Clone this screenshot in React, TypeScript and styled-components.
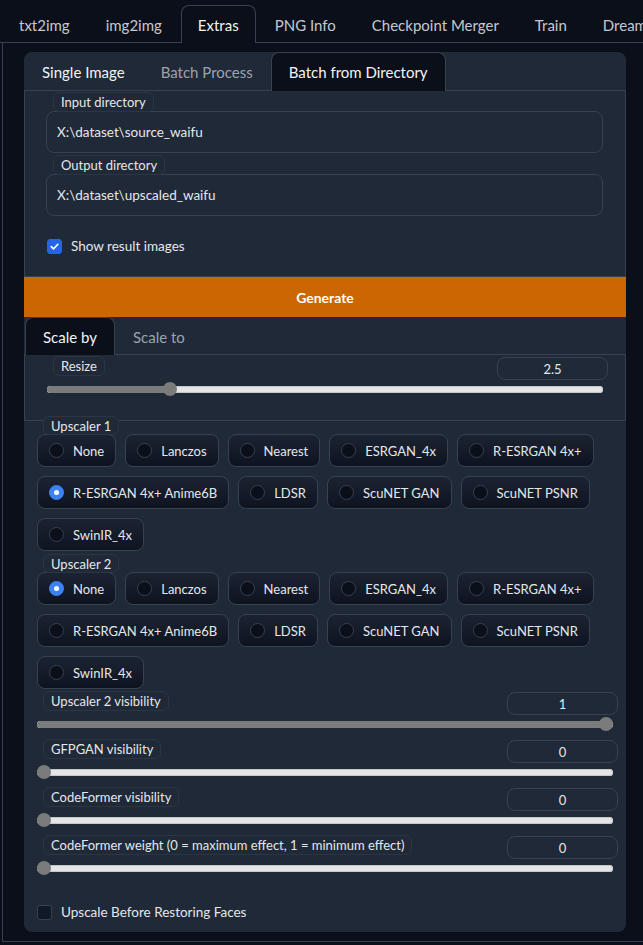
import styled, { createGlobalStyle } from "styled-components";

const GlobalStyle = createGlobalStyle`
  body {
    margin: 0;
    background: #0b0f19;
    color: #e5e7eb;
    font-family: Lato, "Noto Sans", sans-serif;
    overflow: hidden;
  }
`;

const Page = styled.div`
  width: 680px;
`;

const TopTabs = styled.div`
  display: flex;
  align-items: flex-end;
  height: 43px;
  border-bottom: 1px solid #374151;
  padding-left: 2px;
  box-sizing: border-box;
`;

const TopTab = styled.div<{ $active?: boolean }>`
  box-sizing: border-box;
  padding: 0 16px;
  margin-right: 2px;
  margin-bottom: -1px;
  display: flex;
  align-items: center;
  font-size: 15px;
  white-space: nowrap;
  color: ${(p) => (p.$active ? "#f3f4f6" : "#c4c9d1")};
  background: ${(p) => (p.$active ? "#0b0f19" : "transparent")};
  border: 1px solid ${(p) => (p.$active ? "#374151" : "transparent")};
  border-bottom: none;
  border-radius: 8px 8px 0 0;
  height: 38px;
`;

const Outer = styled.div`
  margin-left: 2px;
  border: 1px solid #374151;
  border-top: none;
  padding: 9px 0 9px 21px;
`;

const Panel = styled.div`
  width: 602px;
  background: #1f2937;
  border-radius: 8px;
  overflow: hidden;
`;

const TabRow = styled.div`
  display: flex;
  height: 39px;
  border-bottom: 1px solid #374151;
  box-sizing: border-box;
`;

const Tab = styled.div<{ $active?: boolean; $dim?: boolean }>`
  display: flex;
  align-items: center;
  padding: 0 17px;
  margin-bottom: -1px;
  font-size: 15px;
  white-space: nowrap;
  color: ${(p) => (p.$dim ? "#9ca3af" : "#f3f4f6")};
  background: ${(p) => (p.$active ? "#0b0f19" : "transparent")};
  border: 1px solid ${(p) => (p.$active ? "#374151" : "transparent")};
  border-bottom: none;
  border-radius: 8px 8px 0 0;
`;

const TabBody = styled.div`
  border: 1px solid #374151;
  border-top: none;
  padding: 1px 22px 22px 21px;
`;

const Field = styled.div`
  display: flex;
  flex-direction: column;
  align-items: flex-start;
  margin-bottom: 2px;
`;

const Label = styled.span`
  display: flex;
  width: fit-content;
  align-items: center;
  height: 20px;
  box-sizing: border-box;
  padding: 0 7px;
  font-size: 13px;
  color: #e5e7eb;
  background: #1f2937;
  border: 1px solid #2b3544;
  border-radius: 6px;
  white-space: nowrap;
  position: relative;
  z-index: 1;
`;

const FieldLabel = styled(Label)`
  margin-left: 7px;
`;

const TextBox = styled.div`
  align-self: stretch;
  height: 42px;
  margin-top: -1px;
  box-sizing: border-box;
  border: 1px solid #374151;
  border-radius: 8px;
  display: flex;
  align-items: center;
  padding-left: 10px;
  font-size: 13.5px;
  color: #e5e7eb;
`;

const CheckRow = styled.div`
  display: flex;
  align-items: center;
  gap: 9px;
  font-size: 13.5px;
  line-height: 16px;
  color: #e5e7eb;
`;

const Box = styled.span<{ $checked?: boolean }>`
  width: 15px;
  height: 15px;
  box-sizing: border-box;
  border-radius: 3px;
  display: flex;
  align-items: center;
  justify-content: center;
  background: ${(p) => (p.$checked ? "#2563eb" : "#111827")};
  border: 1px solid ${(p) => (p.$checked ? "#2563eb" : "#374151")};
`;

const ResultCheck = styled(CheckRow)`
  margin: 22px 0 0 1px;
`;

const GenerateButton = styled.div`
  height: 40px;
  background: #cc6600;
  color: #fff;
  font-weight: 700;
  font-size: 14px;
  display: flex;
  align-items: center;
  justify-content: center;
`;

const ScaleTabs = styled(TabRow)`
  height: 38px;
  padding-left: 1px;
`;

const ScaleBody = styled.div`
  border: 1px solid #374151;
  border-top: none;
  height: 66px;
  box-sizing: border-box;
  padding: 1px 17px 0 22px;
`;

const SliderBlock = styled.div`
  height: 48px;
  display: flex;
  flex-direction: column;
`;

const SliderHead = styled.div`
  display: flex;
  justify-content: space-between;
  align-items: flex-start;
  height: 26px;
  padding-left: 6px;
`;

const NumberBox = styled.div`
  width: 111px;
  height: 23px;
  margin-top: 1px;
  box-sizing: border-box;
  border: 1px solid #374151;
  border-radius: 8px;
  display: flex;
  align-items: center;
  justify-content: center;
  font-size: 13px;
  color: #e5e7eb;
`;

const Track = styled.div`
  position: relative;
  height: 14px;
  margin-right: 5px;
  display: flex;
  align-items: center;
`;

const Rail = styled.div`
  flex: 1;
  height: 7px;
  border-radius: 4px;
  background: #e5e5e5;
  box-shadow: inset 0 0 0 1px #c7c7c7;
  overflow: hidden;
`;

const Fill = styled.div`
  height: 100%;
  background: #7b7b7b;
`;

const Thumb = styled.div`
  position: absolute;
  top: 0;
  width: 14px;
  height: 14px;
  margin-left: -7px;
  border-radius: 50%;
  background: #7b7b7b;
`;

const Lower = styled.div`
  padding: 0 8px 12px 13px;
`;

const GroupLabel = styled(Label)<{ $gap: number }>`
  height: 19px;
  margin: ${(p) => p.$gap}px 0 0 6px;
`;

const RadioGrid = styled.div`
  display: flex;
  flex-wrap: wrap;
  gap: 9px;
  margin-top: -1px;
`;

const RadioButton = styled.div`
  height: 33px;
  box-sizing: border-box;
  padding: 0 11px;
  display: flex;
  align-items: center;
  gap: 9px;
  border: 1px solid #374151;
  border-radius: 8px;
  background: linear-gradient(180deg, #1b2332 0%, #0e1320 100%);
  font-size: 13px;
  color: #e5e7eb;
  white-space: nowrap;
`;

const Dot = styled.span<{ $checked?: boolean }>`
  width: 15px;
  height: 15px;
  box-sizing: border-box;
  border-radius: 50%;
  display: flex;
  align-items: center;
  justify-content: center;
  background: ${(p) => (p.$checked ? "#3b82f6" : "#0b0f19")};
  border: 1px solid ${(p) => (p.$checked ? "#3b82f6" : "#374151")};
  &::after {
    content: "";
    width: 5px;
    height: 5px;
    border-radius: 50%;
    background: ${(p) => (p.$checked ? "#fff" : "transparent")};
  }
`;

const Spacer = styled.div<{ $h: number }>`
  height: ${(p) => p.$h}px;
`;

const BottomCheck = styled(CheckRow)`
  margin-top: 21px;
`;

const upscalers = [
  "None",
  "Lanczos",
  "Nearest",
  "ESRGAN_4x",
  "R-ESRGAN 4x+",
  "R-ESRGAN 4x+ Anime6B",
  "LDSR",
  "ScuNET GAN",
  "ScuNET PSNR",
  "SwinIR_4x",
];

function Slider({ label, value, frac }: { label: string; value: string; frac: number }) {
  const pos = `calc(7px + (100% - 14px) * ${frac})`;
  return (
    <SliderBlock>
      <SliderHead>
        <Label>{label}</Label>
        <NumberBox>{value}</NumberBox>
      </SliderHead>
      <Track>
        <Rail>
          <Fill style={{ width: pos }} />
        </Rail>
        <Thumb style={{ left: pos }} />
      </Track>
    </SliderBlock>
  );
}

function RadioGroup({ label, selected, gap }: { label: string; selected: string; gap: number }) {
  return (
    <>
      <GroupLabel $gap={gap}>{label}</GroupLabel>
      <RadioGrid>
        {upscalers.map((u) => (
          <RadioButton key={u}>
            <Dot $checked={u === selected} />
            {u}
          </RadioButton>
        ))}
      </RadioGrid>
    </>
  );
}

export default function App() {
  return (
    <Page>
      <GlobalStyle />
      <TopTabs>
        <TopTab>txt2img</TopTab>
        <TopTab>img2img</TopTab>
        <TopTab $active>Extras</TopTab>
        <TopTab>PNG Info</TopTab>
        <TopTab>Checkpoint Merger</TopTab>
        <TopTab>Train</TopTab>
        <TopTab>Dreambooth</TopTab>
      </TopTabs>
      <Outer>
        <Panel>
          <TabRow>
            <Tab>Single Image</Tab>
            <Tab $dim>Batch Process</Tab>
            <Tab $active>Batch from Directory</Tab>
          </TabRow>
          <TabBody>
            <Field>
              <FieldLabel>Input directory</FieldLabel>
              <TextBox>X:\dataset\source_waifu</TextBox>
            </Field>
            <Field>
              <FieldLabel>Output directory</FieldLabel>
              <TextBox>X:\dataset\upscaled_waifu</TextBox>
            </Field>
            <ResultCheck>
              <Box $checked>
                <svg width="11" height="11" viewBox="0 0 12 12">
                  <path d="M2.5 6.2l2.4 2.4 4.8-5" fill="none" stroke="#fff" strokeWidth="1.8" strokeLinecap="round" strokeLinejoin="round" />
                </svg>
              </Box>
              Show result images
            </ResultCheck>
          </TabBody>
          <GenerateButton>Generate</GenerateButton>
          <ScaleTabs>
            <Tab $active>Scale by</Tab>
            <Tab $dim>Scale to</Tab>
          </ScaleTabs>
          <ScaleBody>
            <Slider label="Resize" value="2.5" frac={0.2143} />
          </ScaleBody>
          <Lower>
            <RadioGroup label="Upscaler 1" selected="R-ESRGAN 4x+ Anime6B" gap={-5} />
            <RadioGroup label="Upscaler 2" selected="None" gap={3} />
            <Spacer $h={2} />
            <Slider label="Upscaler 2 visibility" value="1" frac={1} />
            <Slider label="GFPGAN visibility" value="0" frac={0} />
            <Slider label="CodeFormer visibility" value="0" frac={0} />
            <Slider label="CodeFormer weight (0 = maximum effect, 1 = minimum effect)" value="0" frac={0} />
            <BottomCheck>
              <Box />
              Upscale Before Restoring Faces
            </BottomCheck>
          </Lower>
        </Panel>
      </Outer>
    </Page>
  );
}
